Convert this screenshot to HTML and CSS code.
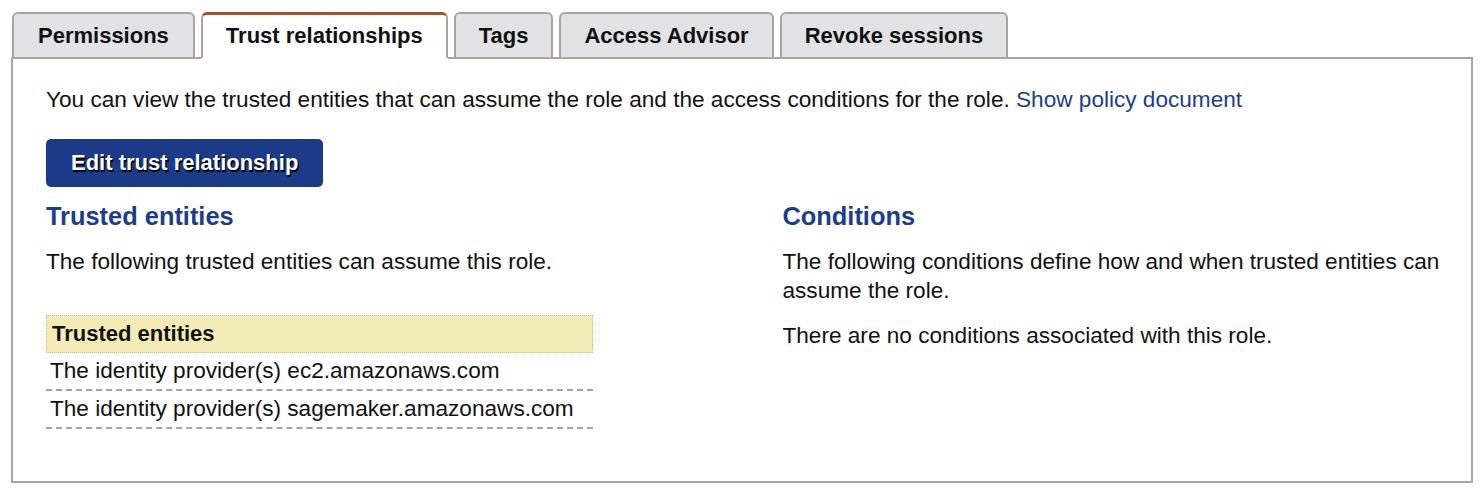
FILE: index.html
```html
<!DOCTYPE html>
<html lang="en">
<head>
<meta charset="utf-8">
<title>Trust relationships</title>
<link rel="stylesheet" href="styles.css">
</head>
<body>
<div class="page">
  <div class="tabs">
    <div class="tab">Permissions</div>
    <div class="tab active">Trust relationships</div>
    <div class="tab">Tags</div>
    <div class="tab">Access Advisor</div>
    <div class="tab">Revoke sessions</div>
  </div>
  <div class="panel">
    <p class="intro">You can view the trusted entities that can assume the role and the access conditions for the role. <a class="link" href="#">Show policy document</a></p>
    <button class="btn">Edit trust relationship</button>
    <div class="cols">
      <div class="col">
        <h2 class="heading">Trusted entities</h2>
        <p class="text">The following trusted entities can assume this role.</p>
        <div class="table">
          <div class="thead">Trusted entities</div>
          <div class="row">The identity provider(s) ec2.amazonaws.com</div>
          <div class="row">The identity provider(s) sagemaker.amazonaws.com</div>
        </div>
      </div>
      <div class="col">
        <h2 class="heading">Conditions</h2>
        <p class="text">The following conditions define how and when trusted entities can assume the role.</p>
        <p class="text gap">There are no conditions associated with this role.</p>
      </div>
    </div>
  </div>
</div>
</body>
</html>
```

FILE: styles.css
```css
* { box-sizing: border-box; }
html, body { margin: 0; padding: 0; background: #fff; }
body {
  font-family: "Liberation Sans", Arial, Helvetica, sans-serif;
  color: #111;
  font-size: 22.6px;
}
.page {
  padding: 12px 10px 0 11px;
}
.tabs {
  display: flex;
  gap: 6px;
  position: relative;
  z-index: 1;
  margin-bottom: -2px;
  padding-left: 1px;
}
.tab {
  height: 47px;
  display: flex;
  align-items: center;
  padding: 0 23px;
  background: #e1e3e4;
  border: 2px solid #aaa59c;
  border-radius: 6px 6px 0 0;
  font-weight: bold;
  font-size: 22px;
  color: #111;
}
.tab:first-child { padding: 0 24px; }
.tab.active {
  background: #fff;
  border-top: 3px solid #a5542a;
  border-bottom: 2px solid #fff;
}
.panel {
  border: 2px solid #aaa59c;
  padding: 26px 20px 52px 33px;
}
.intro {
  margin: 0;
  line-height: 29px;
}
.link {
  color: #1d3d8e;
  text-decoration: none;
}
.btn {
  margin-top: 25px;
  height: 48px;
  padding: 0 25px;
  border: none;
  border-radius: 5px;
  background: #1b3a88;
  color: #fff;
  font-family: "Liberation Sans", Arial, sans-serif;
  font-weight: bold;
  font-size: 22px;
  text-shadow: 1px 1px 0 #000, 1px 2px 1px #000;
  display: flex;
  align-items: center;
}
.cols {
  display: grid;
  grid-template-columns: 1fr 1fr;
  column-gap: 68px;
  margin-top: 14px;
}
.heading {
  margin: 0;
  font-size: 25.4px;
  line-height: 30px;
  font-weight: bold;
  color: #1d3d8e;
}
.text {
  margin: 16px 0 0;
  line-height: 29px;
}
.text.gap { margin-top: 16px; }
.table {
  width: 547px;
  margin-top: 39px;
}
.thead {
  height: 38px;
  display: flex;
  align-items: center;
  padding: 0 5px;
  background: #f3ecb6;
  border: 1px dotted #c8bf8e;
  font-weight: bold;
  font-size: 22px;
}
.row {
  height: 38px;
  display: flex;
  align-items: center;
  padding: 0 4px;
  border-bottom: 2px dashed #a3a3a3;
}
```
